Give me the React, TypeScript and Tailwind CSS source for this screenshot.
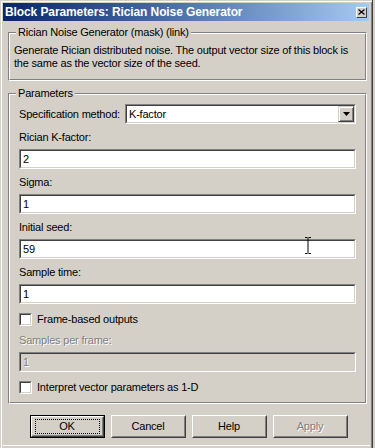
import type { ReactNode } from 'react';

const font = "font-['Liberation_Sans',Arial,sans-serif]";

function GroupBox({ title, className, children }: { title: string; className?: string; children: ReactNode }) {
  return (
    <div className={`relative border border-t-[#808080] border-l-[#808080] border-r-white border-b-white ${className ?? ''}`}>
      <div className="h-full border border-t-white border-l-white border-r-[#808080] border-b-[#808080]">
        {children}
      </div>
      <span className="absolute left-[7px] top-[-7px] bg-[#D4D0C8] px-[2px] leading-[13px] text-black">{title}</span>
    </div>
  );
}

function Sunken({ className, children }: { className?: string; children?: ReactNode }) {
  return (
    <div
      className={`border border-t-[#808080] border-l-[#808080] border-r-white border-b-white ${className ?? ''}`}
    >
      <div className="h-full border border-t-[#404040] border-l-[#404040] border-r-[#D4D0C8] border-b-[#D4D0C8]">
        {children}
      </div>
    </div>
  );
}

function Field({ label, value, disabled, cursor }: { label: string; value: string; disabled?: boolean; cursor?: boolean }) {
  const tone = disabled ? 'text-[#808080] [text-shadow:1px_1px_0_#fff]' : 'text-black';
  return (
    <div className="flex flex-col">
      <div className={`h-[13px] leading-[13px] ${tone}`}>{label}</div>
      <Sunken className={`relative mt-[5px] h-[20px] ${disabled ? 'bg-[#D4D0C8]' : 'bg-white'}`}>
        <div className={`pl-[2px] leading-[16px] ${tone}`}>{value}</div>
        {cursor && (
          <svg className="absolute left-[284px] top-[-3px]" width="8" height="17" viewBox="0 0 8 17">
            <path d="M1 0.5h2.5M4.5 0.5H7M4 1v15M1 16.5h2.5M4.5 16.5H7" stroke="#000" strokeWidth="1" fill="none" />
          </svg>
        )}
      </Sunken>
    </div>
  );
}

function Checkbox({ label }: { label: string }) {
  return (
    <div className="flex items-center gap-[5px] h-[13px]">
      <Sunken className="w-[13px] h-[13px] bg-white" />
      <span className="leading-[13px] text-black">{label}</span>
    </div>
  );
}

function Button({ label, isDefault, disabled }: { label: string; isDefault?: boolean; disabled?: boolean }) {
  return (
    <div className={`w-[75px] h-[23px] ${isDefault ? 'border border-black' : ''}`}>
      <div className="h-full border border-t-white border-l-white border-r-[#404040] border-b-[#404040]">
        <div className="h-full border border-t-[#D4D0C8] border-l-[#D4D0C8] border-r-[#808080] border-b-[#808080] flex items-center justify-center">
          {isDefault ? (
            <div className="w-[65px] h-[15px] border border-dotted border-black flex items-center justify-center leading-[13px]">
              {label}
            </div>
          ) : (
            <span className={disabled ? 'text-[#808080] [text-shadow:1px_1px_0_#fff]' : 'text-black'}>{label}</span>
          )}
        </div>
      </div>
    </div>
  );
}

export default function App() {
  return (
    <div className={`w-[375px] h-[448px] bg-[#D4D0C8] overflow-hidden text-[11px] tracking-[-0.2px] ${font}`}>
      <div className="w-[373px] h-[448px] bg-[#D4D0C8] p-[3px] border-r border-r-[#404040] shadow-[inset_1px_1px_#D4D0C8,inset_2px_2px_#fff,inset_-1px_0_#808080] flex flex-col">
        {/* title bar */}
        <div className="h-[18px] shrink-0 flex items-center justify-between bg-gradient-to-r from-[#0A246A] to-[#A6CAF0] pl-[2px] pr-[2px]">
          <span className="text-white font-bold text-[12px] tracking-[-0.1px] leading-[18px]">
            Block Parameters: Rician Noise Generator
          </span>
          <div className="w-[11px] h-[11px] bg-[#D4D0C8] border border-t-white border-l-white border-r-[#404040] border-b-[#404040] flex items-center justify-center">
            <svg width="7" height="6" viewBox="0 0 7 6">
              <path d="M0.5 0.5L6.5 5.5M6.5 0.5L0.5 5.5" stroke="#000" strokeWidth="1.2" fill="none" />
            </svg>
          </div>
        </div>

        <div className="pl-[5px] pt-[11px] flex flex-col">
          <GroupBox title="Rician Noise Generator (mask) (link)" className="w-[359px] h-[49px]">
            <div className="pl-[4px] pt-[10px] leading-[13px] text-black whitespace-nowrap">
              Generate Rician distributed noise. The output vector size of this block is
              <br />
              the same as the vector size of the seed.
            </div>
          </GroupBox>

          <GroupBox title="Parameters" className="mt-[12px] w-[359px] h-[311px]">
            <div className="px-[9px] pt-[9px] flex flex-col">
              <div className="flex items-center h-[20px]">
                <span className="w-[106px] leading-[13px] text-black">Specification method:</span>
                <Sunken className="flex-1 h-[20px] bg-white">
                  <div className="flex h-full items-stretch">
                    <span className="flex-1 pl-[2px] leading-[16px] text-black">K-factor</span>
                    <div className="w-[16px] h-[16px] bg-[#D4D0C8] border border-t-[#D4D0C8] border-l-[#D4D0C8] border-r-[#404040] border-b-[#404040] shadow-[inset_1px_1px_#fff,inset_-1px_-1px_#808080] flex items-center justify-center">
                      <svg width="7" height="4" viewBox="0 0 7 4">
                        <path d="M0 0h7L3.5 4z" fill="#000" />
                      </svg>
                    </div>
                  </div>
                </Sunken>
              </div>
              <div className="mt-[7px] flex flex-col gap-[7px]">
                <Field label="Rician K-factor:" value="2" />
                <Field label="Sigma:" value="1" />
                <Field label="Initial seed:" value="59" cursor />
                <Field label="Sample time:" value="1" />
              </div>
              <div className="mt-[9px]">
                <Checkbox label="Frame-based outputs" />
              </div>
              <div className="mt-[8px]">
                <Field label="Samples per frame:" value="1" disabled />
              </div>
              <div className="mt-[9px]">
                <Checkbox label="Interpret vector parameters as 1-D" />
              </div>
            </div>
          </GroupBox>

          <div className="mt-[11px] w-[359px] flex justify-center gap-[6px] pl-[2px]">
            <Button label="OK" isDefault />
            <Button label="Cancel" />
            <Button label="Help" />
            <Button label="Apply" disabled />
          </div>
          <div className="mt-[7px] -ml-[5px] w-[367px] h-px bg-white" />
        </div>
      </div>
    </div>
  );
}
